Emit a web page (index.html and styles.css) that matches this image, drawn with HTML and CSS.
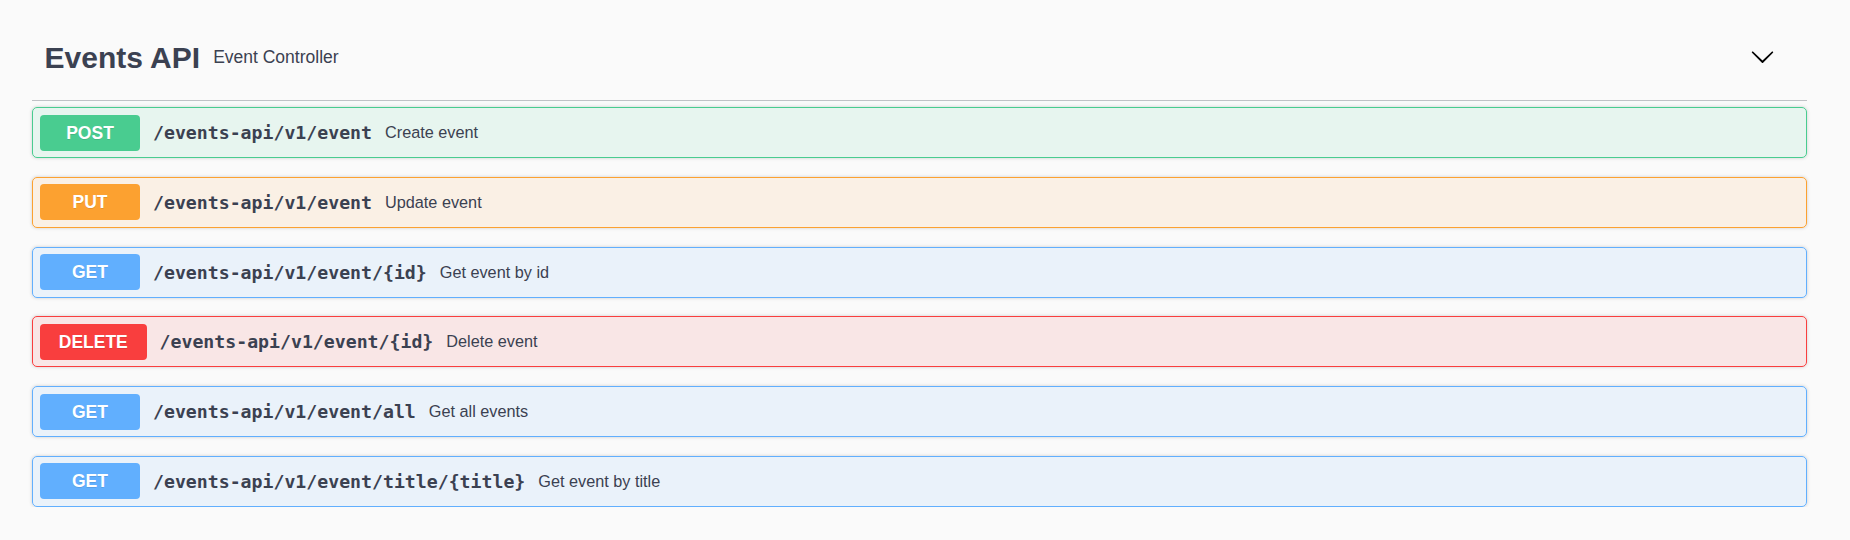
FILE: index.html
```html
<!DOCTYPE html>
<html>
<head>
<meta charset="utf-8">
<link rel="stylesheet" href="styles.css">
</head>
<body>
<div class="wrapper">
  <div class="tag">
    <span class="tag-title">Events API</span>
    <small class="tag-desc">Event Controller</small>
    <button class="expand">
      <svg width="25" height="25" viewBox="0 0 20 20"><path d="M17.418 6.109c.272-.268.709-.268.979 0s.271.701 0 .969l-7.908 7.830c-.27.268-.707.268-.979 0l-7.908-7.830c-.27-.268-.27-.701 0-.969.271-.268.709-.268.979 0L10 13.25l7.418-7.141z" fill="#000"/></svg>
    </button>
  </div>
  <div class="ops">
    <div class="op post"><span class="method">POST</span><span class="path">/events-api/v1/event</span><span class="desc">Create event</span></div>
    <div class="op put"><span class="method">PUT</span><span class="path">/events-api/v1/event</span><span class="desc">Update event</span></div>
    <div class="op get"><span class="method">GET</span><span class="path">/events-api/v1/event/{id}</span><span class="desc">Get event by id</span></div>
    <div class="op delete"><span class="method">DELETE</span><span class="path">/events-api/v1/event/{id}</span><span class="desc">Delete event</span></div>
    <div class="op get"><span class="method">GET</span><span class="path">/events-api/v1/event/all</span><span class="desc">Get all events</span></div>
    <div class="op get"><span class="method">GET</span><span class="path">/events-api/v1/event/title/{title}</span><span class="desc">Get event by title</span></div>
  </div>
</div>
</body>
</html>
```

FILE: styles.css
```css
html, body {
  margin: 0;
  padding: 0;
  background: #fafafa;
}
body {
  font-family: "Liberation Sans", Arial, sans-serif;
  color: #3b4151;
}
.wrapper {
  padding: 15px 43px 0 32px;
}
.tag {
  box-sizing: border-box;
  height: 86px;
  display: flex;
  align-items: center;
  padding: 0 20px 0 12.5px;
  border-bottom: 1px solid rgba(59, 65, 81, 0.3);
  margin-bottom: 6px;
}
.tag-title {
  font-size: 30px;
  font-weight: 700;
  color: #3b4151;
}
.tag-desc {
  flex: 1;
  font-size: 17.5px;
  padding-left: 13px;
  color: #3b4151;
}
.expand {
  background: none;
  border: none;
  padding: 0 12.5px;
  margin: 0;
  display: flex;
  align-items: center;
  margin-top: -2px;
}
.ops {
  display: flex;
  flex-direction: column;
  gap: 18.75px;
}
.op {
  box-sizing: border-box;
  height: 51px;
  display: flex;
  align-items: center;
  padding: 0 7px;
  border: 1px solid;
  border-radius: 5px;
  box-shadow: 0 0 3.75px rgba(0, 0, 0, 0.19);
}
.method {
  box-sizing: border-box;
  min-width: 100px;
  height: 36px;
  line-height: 36px;
  padding: 0 18.75px;
  text-align: center;
  border-radius: 4px;
  color: #fff;
  font-size: 17.5px;
  font-weight: 700;
  text-shadow: 0 1px 0 rgba(0, 0, 0, 0.1);
}
.path {
  font-family: "DejaVu Sans Mono", monospace;
  font-size: 18.2px;
  font-weight: 700;
  padding: 0 13px;
  color: #3b4151;
}
.desc {
  font-size: 16.25px;
  color: #3b4151;
}
.post { background: rgba(73, 204, 144, 0.1); border-color: #49cc90; }
.post .method { background: #49cc90; }
.put { background: rgba(252, 161, 48, 0.1); border-color: #fca130; }
.put .method { background: #fca130; }
.get { background: rgba(97, 175, 254, 0.1); border-color: #61affe; }
.get .method { background: #61affe; }
.delete { background: rgba(249, 62, 62, 0.1); border-color: #f93e3e; }
.delete .method { background: #f93e3e; }
```
